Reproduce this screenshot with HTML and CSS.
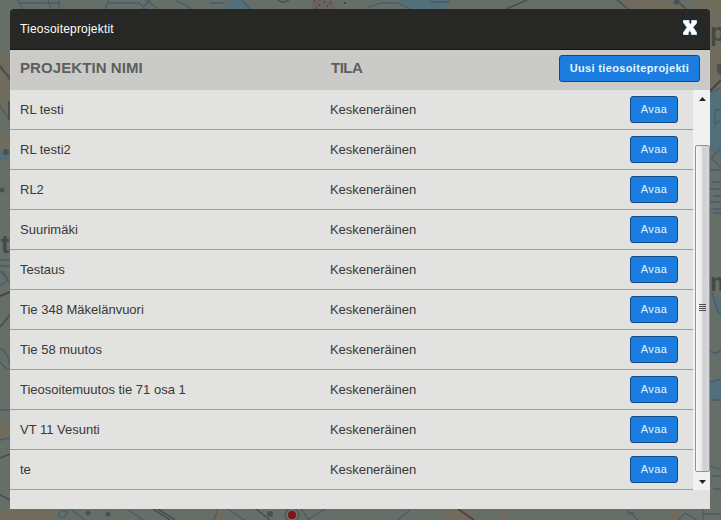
FILE: index.html
```html
<!DOCTYPE html>
<html lang="fi">
<head>
<meta charset="utf-8">
<title>Tieosoiteprojektit</title>
<link rel="stylesheet" href="styles.css">
</head>
<body>
<svg class="map" viewBox="0 0 721 520" aria-hidden="true">
  <rect width="721" height="520" fill="#656e67"/>
  <g fill="#6f6b5d">
    <path d="M0 52Q8 50 10 60V122L0 112Z"/><path d="M4 132L10 136V157L0 150V138Z"/><path d="M0 422L10 418V438L0 440Z"/>
    <path d="M0 512Q20 500 50 509Q60 515 48 520H0Z"/><path d="M617 0H665L690 9H630ZM700 0H721V82L710 90V9H695Z"/>
    <path d="M440 509H470L478 520H446ZM500 512Q506 508 508 520H500ZM672 512Q677 507 680 520H670ZM216 512Q222 507 226 520H214Z"/>
  </g>
  <g fill="#536f79">
    <path d="M398 0H450L444 9H410ZM230 0H242L250 9H223Z"/>
    <path d="M710 92Q721 86 721 104V158L710 150ZM710 382L721 379V400H710ZM716 298H721V313H718Z"/>
    <path d="M0 150L10 157V160H0Z"/>
  </g>
  <g fill="none" stroke="#475c70" stroke-width="1.3">
    <path d="M17 0L23 9M18 3H59M48 0L51 9M59 0V9M105 9L109 0M109 3H139L146 9M146 0L158 9M142 9L150 0M175 0L192 9M210 3H225M242 0L250 9M368 7L381 3H398L410 9M430 2H450"/>
    <path d="M0 105L10 121M0 260H10M0 266H10M0 271L8 280L0 286M3 271L10 283M0 348Q8 352 10 365M0 362Q8 372 10 367M0 410H10M0 440L10 438"/>
    <path d="M710 92L721 88M721 110H715V124L721 120M711 158L721 148M711 158L721 168M710 170H721M712 182H721M710 189H721M713 196H721M710 202H721M711 209H721M713 213H721M712 292L718 313H721M710 351Q716 355 721 350M710 382L721 379M711 400H721M710 466L721 470M712 476H721M713 489H721"/>
    <path d="M58 515Q62 508 68 512Q63 521 58 515M71 509L85 520M127 509L143 520M218 509L214 520M228 509L244 520M307 520L325 509M301 509L309 520M398 520L411 509M627 510L638 520M627 513H634M678 520L685 513L697 520M703 509V520M703 514H721"/>
  </g>
  <g fill="none" stroke="#4a4d50" stroke-width="1.5">
    <path d="M506 9L527 0M617 0L628 9M676 0L686 9M153 509L170 520M158 509L175 520M256 509L270 520"/>
    <path d="M0 65L10 80M0 327L10 315M0 458L10 454M0 495L10 500M278 0Q283 4 289 0"/>
    <path d="M0 68L10 77"/>
  </g>
  <g fill="none" stroke="#57403e" stroke-width="2"><path d="M0 296L10 292M458 509L474 520M710 91L721 80"/></g>
  <g fill="#4a4f50">
    <circle cx="108" cy="514" r="2.5"/><circle cx="88" cy="513" r="2.5"/><circle cx="270" cy="514" r="3"/><circle cx="2" cy="190" r="2.5"/><circle cx="6" cy="152" r="3"/>
    <path d="M675 0H680L677 5L673 3ZM717 65L721 63V76L717 72ZM8 101H10V120H8Z"/>
  </g>
  <path d="M312 0H332L336 9H312Z" fill="#696462"/>
  <path d="M314 1h1M319 5h1M324 2h1M327 6h1M316 8h1M330 3h1M344 3h2" stroke="#393d3d" stroke-width="1.5"/>
  <g class="map-label"><text x="710" y="41">p</text><text x="710" y="291">m</text><text x="1" y="253">t</text></g>
  <circle cx="292" cy="515" r="7" fill="none" stroke="#454b4d" stroke-width="1"/>
  <circle cx="292" cy="515" r="4" fill="#7d1418"/>
</svg>
<main class="dialog">
  <header class="titlebar">
    <span>Tieosoiteprojektit</span>
    <svg class="close" viewBox="0 0 14 15" aria-label="Sulje"><path d="M.5 .5H6V2.5L7.3 4.7L8.7 2.5V.5H13.5V3L10 7.3L13.5 12.5V14.5H8.3V12.8L6.8 10.3L5.2 12.8V14.5H.5V12.5L4 7.5L1 3H.5Z" fill="#fff" stroke="#c9e4fb"/></svg>
  </header>
  <div class="columns">
    <h2 class="name">PROJEKTIN NIMI</h2>
    <h2 class="state">TILA</h2>
    <button class="btn create">Uusi tieosoiteprojekti</button>
  </div>
  <div class="content">
    <div class="list">
      <div class="row"><span class="name">RL testi</span><span class="state">Keskeneräinen</span><button class="btn">Avaa</button></div>
      <div class="row"><span class="name">RL testi2</span><span class="state">Keskeneräinen</span><button class="btn">Avaa</button></div>
      <div class="row"><span class="name">RL2</span><span class="state">Keskeneräinen</span><button class="btn">Avaa</button></div>
      <div class="row"><span class="name">Suurimäki</span><span class="state">Keskeneräinen</span><button class="btn">Avaa</button></div>
      <div class="row"><span class="name">Testaus</span><span class="state">Keskeneräinen</span><button class="btn">Avaa</button></div>
      <div class="row"><span class="name">Tie 348 Mäkelänvuori</span><span class="state">Keskeneräinen</span><button class="btn">Avaa</button></div>
      <div class="row"><span class="name">Tie 58 muutos</span><span class="state">Keskeneräinen</span><button class="btn">Avaa</button></div>
      <div class="row"><span class="name">Tieosoitemuutos tie 71 osa 1</span><span class="state">Keskeneräinen</span><button class="btn">Avaa</button></div>
      <div class="row"><span class="name">VT 11 Vesunti</span><span class="state">Keskeneräinen</span><button class="btn">Avaa</button></div>
      <div class="row"><span class="name">te</span><span class="state">Keskeneräinen</span><button class="btn">Avaa</button></div>
    </div>
    <div class="scrollbar">
      <svg class="arrow" viewBox="0 0 7 4"><path d="M0 4L3.5 0L7 4Z"/></svg>
      <div class="thumb"><i></i><i></i><i></i><i></i></div>
      <svg class="arrow" viewBox="0 0 7 4"><path d="M0 0L3.5 4L7 0Z"/></svg>
    </div>
  </div>
</main>
</body>
</html>
```
FILE: styles.css
```css
* { box-sizing: border-box; }
body {
  margin: 0;
  height: 520px;
  padding: 9px 11px 11px 10px;
  overflow: hidden;
  font-family: "Liberation Sans", Arial, sans-serif;
  font-size: 13px;
  color: #383836;
}
.map { position: absolute; left: 0; top: 0; width: 721px; height: 520px; }
.map-label { font: bold 25px "Liberation Sans", sans-serif; fill: #464848; }
.dialog {
  position: relative;
  width: 700px;
  height: 500px;
  background: #e2e2e0;
  border-radius: 3px 3px 0 0;
  overflow: hidden;
}
.titlebar {
  height: 41px;
  padding: 0 13px 0 10px;
  display: flex;
  align-items: center;
  justify-content: space-between;
  background: #272725;
  border-bottom: 1px solid #161615;
  color: #fff;
  font-size: 12px;
  letter-spacing: 0.2px;
}
.close { width: 14px; height: 15px; margin-bottom: 3px; }
.columns {
  height: 40px;
  padding: 5px 10px 0;
  display: flex;
  align-items: flex-start;
  background: #cacac8;
}
h2 { margin: 0; font-size: 15px; line-height: 26px; color: #5e5e5c; }
.name { width: 310px; }
.columns .name { width: 311px; letter-spacing: 0.08px; }
.columns .state { letter-spacing: -0.5px; }
.row .state { letter-spacing: -0.05px; }
.btn {
  width: 48px;
  height: 27px;
  margin: 0 0 0 auto;
  padding: 0 0 1px;
  border: 1px solid #114b87;
  border-radius: 3px;
  background: #1b7de0;
  color: #e4f5ff;
  font: 11px "Liberation Sans", Arial, sans-serif;
  letter-spacing: 0.35px;
}
.create { width: 141px; font-weight: bold; }
.content { height: 400px; display: flex; }
.list { width: 683px; }
.row {
  height: 40px;
  padding: 0 15px 0 10px;
  display: flex;
  align-items: center;
  border-bottom: 1px solid #9d9d9d;
}
.scrollbar {
  width: 17px;
  padding: 7px 1px 6px 2px;
  display: flex;
  flex-direction: column;
  align-items: center;
  justify-content: space-between;
  background: #f1f1f1;
}
.arrow { width: 7px; height: 4px; fill: #252525; }
.thumb {
  width: 15px;
  height: 327px;
  margin: 40px 0 5px;
  display: flex;
  flex-direction: column;
  align-items: center;
  justify-content: center;
  border: 1px solid #929294;
  border-radius: 2px;
  background: linear-gradient(90deg, #f7f7f7, #e7e7e9 45%, #cdcdd2 55%, #d8d8dc);
}
.thumb i { width: 7px; height: 2px; border-top: 1px solid #4c4c4c; }
```
